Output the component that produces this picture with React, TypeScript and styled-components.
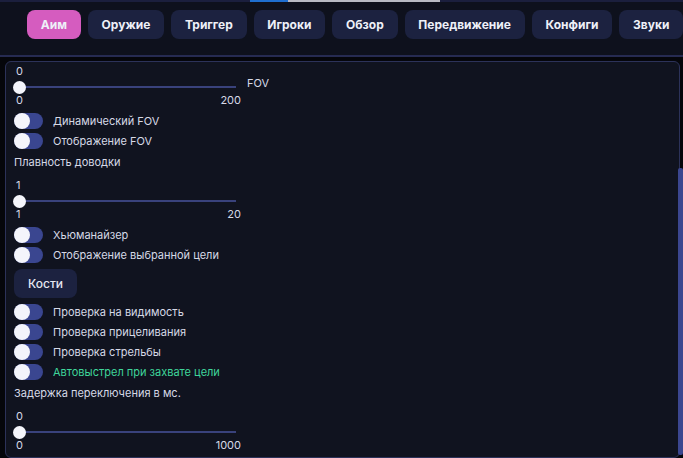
import React from 'react'
import styled, { createGlobalStyle } from 'styled-components'

const GlobalStyle = createGlobalStyle`
  html, body {
    margin: 0;
    padding: 0;
    background: #05060b;
    font-family: Inter, "Noto Sans", "Liberation Sans", sans-serif;
    color: #d6d9e6;
  }
`

const tabs = ['Аим', 'Оружие', 'Триггер', 'Игроки', 'Обзор', 'Передвижение', 'Конфиги', 'Звуки']

const Page = styled.div`
  position: relative;
  width: 683px;
  height: 458px;
  overflow: hidden;
  display: flex;
  flex-direction: column;
`

const LoadLine = styled.div`
  display: flex;
  height: 2px;
  background: #1b1f3d;
`

const LoadPart = styled.div<{ $w: number; $c: string }>`
  width: ${p => p.$w}px;
  background: ${p => p.$c};
`

const Nav = styled.nav`
  display: flex;
  gap: 7px;
  padding: 8px 0 16px 27px;
  background: #0e111d;
  border-bottom: 2px solid #262b52;
`

const Tab = styled.button<{ $active?: boolean }>`
  height: 29px;
  padding: 0 13.8px;
  border: none;
  border-radius: 8px;
  background: ${p => (p.$active ? '#d55cbf' : '#1c2240')};
  color: #eef0f8;
  font-family: inherit;
  font-size: 12px;
  font-weight: 700;
  cursor: pointer;
`

const Panel = styled.section`
  margin: 4px 3px 0 5px;
  height: 394px;
  padding: 1px 8px 0;
  border: 1px solid #2c3259;
  border-radius: 6px;
  background: #10131f;
  display: flex;
  flex-direction: column;
  align-items: flex-start;
  font-size: 11px;
`

const ScrollThumb = styled.div`
  position: absolute;
  right: 0;
  top: 168px;
  bottom: 3px;
  width: 5px;
  border-radius: 2px;
  background: #3b468f;
`

const SliderWrap = styled.div<{ $mt: number }>`
  margin: ${p => p.$mt}px 0 6px;
  display: flex;
  flex-direction: column;
`

const SliderValue = styled.div`
  height: 16px;
  line-height: 16px;
  padding-left: 2px;
`

const TrackRow = styled.div`
  display: flex;
  align-items: flex-start;
  height: 16px;
`

const Track = styled.div`
  position: relative;
  width: 227px;
  height: 16px;

  &::before {
    content: '';
    position: absolute;
    left: 4px;
    right: 5px;
    top: 7px;
    height: 2px;
    background: #39427c;
  }
`

const Thumb = styled.div<{ $pos: number }>`
  position: absolute;
  top: 1.5px;
  left: calc(${p => p.$pos} * 218px - 1px);
  width: 13px;
  height: 13px;
  border-radius: 50%;
  background: #f4f5fb;
`

const TrackLabel = styled.span`
  margin: -3px 0 0 6px;
  line-height: 14px;
`

const Limits = styled.div`
  width: 227px;
  height: 10px;
  line-height: 10px;
  padding-left: 2px;
  box-sizing: border-box;
  display: flex;
  justify-content: space-between;
`

const ToggleRow = styled.label<{ $accent?: boolean }>`
  display: flex;
  align-items: center;
  gap: 10px;
  height: 20px;
  color: ${p => (p.$accent ? '#3fd59a' : '#d6d9e6')};
`

const Switch = styled.span`
  position: relative;
  width: 29px;
  height: 16px;
  border-radius: 8px;
  background: #3a4690;

  &::after {
    content: '';
    position: absolute;
    left: 0;
    top: 0;
    width: 16px;
    height: 16px;
    border-radius: 50%;
    background: #f4f5fb;
  }
`

const Heading = styled.div`
  height: 22px;
  line-height: 22px;
`

const Action = styled.button`
  margin: 4px 0;
  height: 29px;
  padding: 0 14px;
  border: none;
  border-radius: 8px;
  background: #1c2240;
  color: #e6e8f2;
  font-family: inherit;
  font-size: 12px;
  font-weight: 500;
`

type SliderProps = { value: number; min: number; max: number; label?: string; mt?: number }

const Slider = ({ value, min, max, label, mt = 0 }: SliderProps) => (
  <SliderWrap $mt={mt}>
    <SliderValue>{value}</SliderValue>
    <TrackRow>
      <Track>
        <Thumb $pos={(value - min) / (max - min)} />
      </Track>
      {label && <TrackLabel>{label}</TrackLabel>}
    </TrackRow>
    <Limits>
      <span>{min}</span>
      <span>{max}</span>
    </Limits>
  </SliderWrap>
)

const Toggle = ({ text, accent }: { text: string; accent?: boolean }) => (
  <ToggleRow $accent={accent}>
    <Switch />
    {text}
  </ToggleRow>
)

export default function App() {
  return (
    <Page>
      <GlobalStyle />
      <LoadLine>
        <LoadPart $w={250} $c="transparent" />
        <LoadPart $w={38} $c="#1f6fd0" />
        <LoadPart $w={152} $c="#b8bac4" />
      </LoadLine>
      <Nav>
        {tabs.map((t, i) => (
          <Tab key={t} $active={i === 0}>{t}</Tab>
        ))}
      </Nav>
      <Panel>
        <Slider value={0} min={0} max={200} label="FOV" />
        <Toggle text="Динамический FOV" />
        <Toggle text="Отображение FOV" />
        <Heading>Плавность доводки</Heading>
        <Slider value={1} min={1} max={20} mt={4} />
        <Toggle text="Хьюманайзер" />
        <Toggle text="Отображение выбранной цели" />
        <Action>Кости</Action>
        <Toggle text="Проверка на видимость" />
        <Toggle text="Проверка прицеливания" />
        <Toggle text="Проверка стрельбы" />
        <Toggle text="Автовыстрел при захвате цели" accent />
        <Heading>Задержка переключения в мс.</Heading>
        <Slider value={0} min={0} max={1000} mt={4} />
      </Panel>
      <ScrollThumb />
    </Page>
  )
}
